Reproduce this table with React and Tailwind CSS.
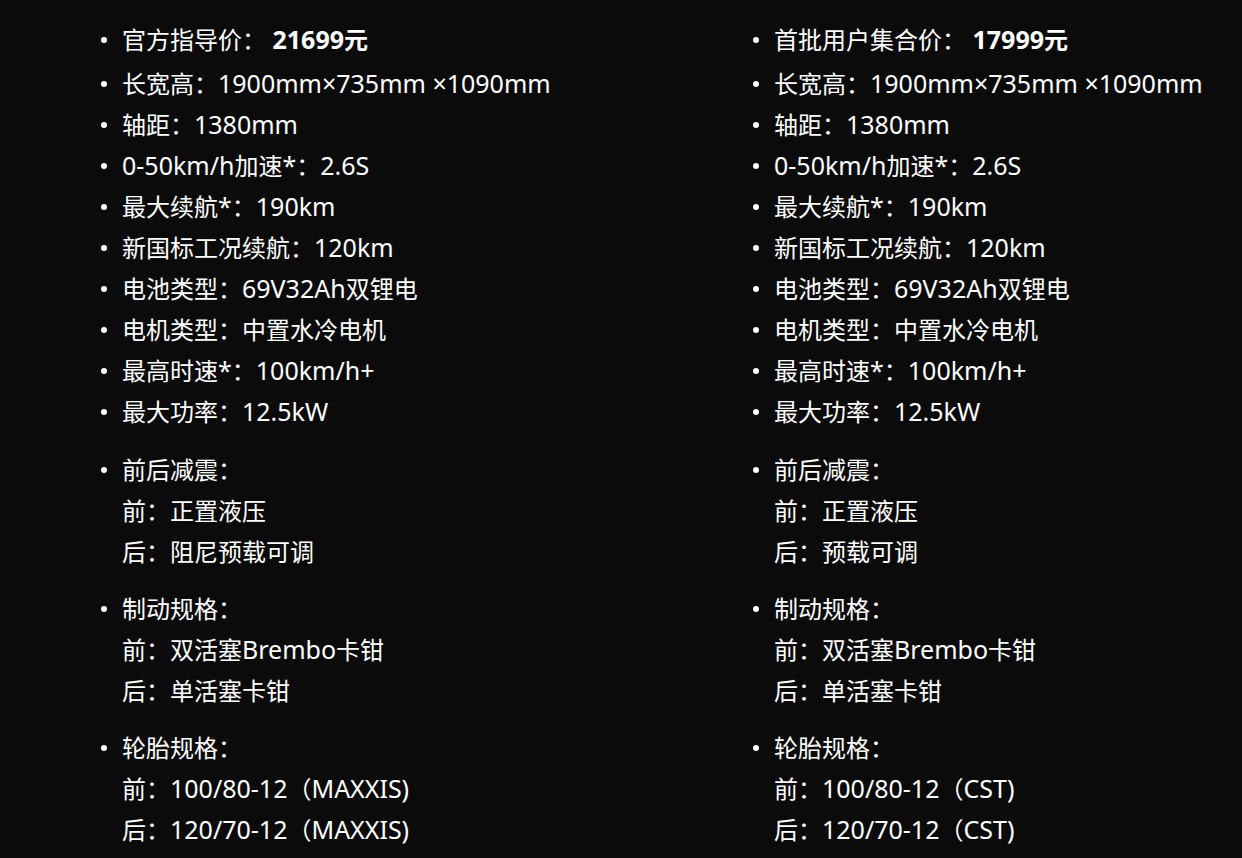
const left = {
  price: ['官方指导价：', '21699元'],
  specs: [
    '长宽高：1900mm×735mm ×1090mm',
    '轴距：1380mm',
    '0-50km/h加速*：2.6S',
    '最大续航*：190km',
    '新国标工况续航：120km',
    '电池类型：69V32Ah双锂电',
    '电机类型：中置水冷电机',
    '最高时速*：100km/h+',
    '最大功率：12.5kW',
  ],
  groups: [
    ['前后减震：', '前：正置液压', '后：阻尼预载可调'],
    ['制动规格：', '前：双活塞Brembo卡钳', '后：单活塞卡钳'],
    ['轮胎规格：', '前：100/80-12（MAXXIS)', '后：120/70-12（MAXXIS)'],
  ],
};

const right = {
  price: ['首批用户集合价：', '17999元'],
  specs: left.specs,
  groups: [
    ['前后减震：', '前：正置液压', '后：预载可调'],
    ['制动规格：', '前：双活塞Brembo卡钳', '后：单活塞卡钳'],
    ['轮胎规格：', '前：100/80-12（CST)', '后：120/70-12（CST)'],
  ],
};

// latin runs are set a touch larger, like the YaHei latin glyphs
const Mixed = ({ text }) =>
  text
    .split(/([\u3000-\u9fff\uff00-\uffef]+)/)
    .filter(Boolean)
    .map((part, i) =>
      /[\u3000-\u9fff\uff00-\uffef]/.test(part) ? (
        <span key={i}>{part}</span>
      ) : (
        <span key={i} className="text-[25px]">
          {part}
        </span>
      )
    );

const Item = ({ children, tall }) => (
  <li className={`flex items-center ${tall ? 'h-[47px]' : 'h-[41px]'}`}>
    <span className="w-5 flex-none flex">
      <span className="block w-[6px] h-[6px] rounded-full bg-white -ml-[1px]" />
    </span>
    <span className="whitespace-pre">{children}</span>
  </li>
);

const Column = ({ data }) => (
  <div className="w-[652px] flex-none">
    <ul>
      <Item tall>
        {data.price[0]}
        <span className="text-[25px]"> </span>
        <b className="font-bold">
          <Mixed text={data.price[1]} />
        </b>
      </Item>
      {data.specs.map((s) => (
        <Item key={s}>
          <Mixed text={s} />
        </Item>
      ))}
    </ul>
    {data.groups.map((g, i) => (
      <ul key={g[0]} className={i === 0 ? 'mt-[17px]' : 'mt-4'}>
        <Item>
          <Mixed text={g[0]} />
        </Item>
        <li className="pl-5 h-[41px] flex items-center whitespace-pre">
          <Mixed text={g[1]} />
        </li>
        <li className="pl-5 h-[41px] flex items-center whitespace-pre">
          <Mixed text={g[2]} />
        </li>
      </ul>
    ))}
  </div>
);

export default function App() {
  return (
    <div
      className="min-h-[858px] bg-[#0b0b0b] text-white text-[24px] leading-none pt-[16px] pl-[102px] flex overflow-hidden"
      style={{ fontFamily: '"Noto Sans", "Noto Sans CJK SC", sans-serif' }}
    >
      <Column data={left} />
      <Column data={right} />
    </div>
  );
}
